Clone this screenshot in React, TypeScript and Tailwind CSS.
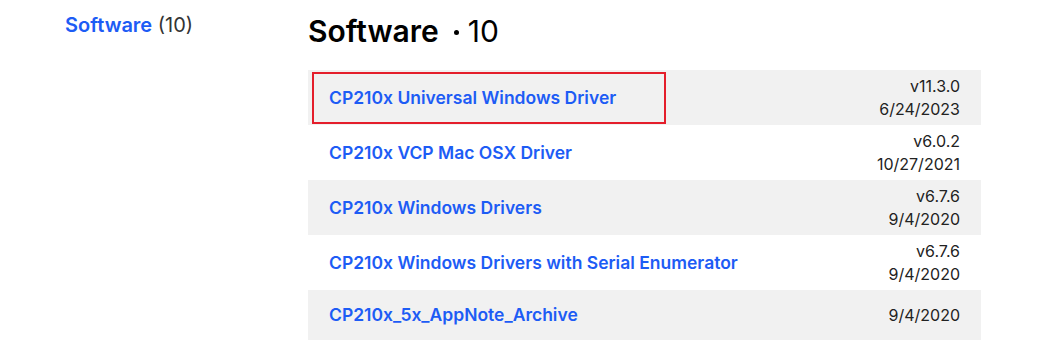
const rows = [
  { name: 'CP210x Universal Windows Driver', version: 'v11.3.0', date: '6/24/2023', highlight: true },
  { name: 'CP210x VCP Mac OSX Driver', version: 'v6.0.2', date: '10/27/2021' },
  { name: 'CP210x Windows Drivers', version: 'v6.7.6', date: '9/4/2020' },
  { name: 'CP210x Windows Drivers with Serial Enumerator', version: 'v6.7.6', date: '9/4/2020' },
  { name: 'CP210x_5x_AppNote_Archive', date: '9/4/2020' },
];

export default function App() {
  return (
    <div className="w-[1041px] h-[350px] bg-white flex font-['Inter',sans-serif] text-[#222]">
      {/* Sidebar */}
      <aside className="w-[308px] pl-[65px] pt-[11px] shrink-0">
        <a href="#" className="text-[20px] leading-[28px]">
          <span className="font-semibold text-[#1d5cf5]">Software</span>{' '}
          <span className="text-[#333]">(10)</span>
        </a>
      </aside>

      {/* Content */}
      <main className="w-[673px] pt-[11px]">
        <h2 className="flex items-center h-[40px] text-[30px] leading-[40px] text-black">
          <span className="font-semibold">Software</span>
          <span className="inline-block w-[5px] h-[5px] rounded-full bg-black ml-[15px] mr-[9px] mt-[3px]" />
          <span className="font-normal">10</span>
        </h2>
        <div className="mt-[19px] flex flex-col">
          {rows.map((row, i) => (
            <div
              key={row.name}
              className={`relative flex items-center justify-between pl-[21px] pr-[21px] ${
                i % 2 === 0 ? 'bg-[#f1f1f1]' : 'bg-white'
              } ${row.version ? 'h-[55px]' : 'h-[50px]'}`}
            >
              {row.highlight && (
                <div className="absolute left-[4px] top-[2px] w-[354px] h-[52px] border-2 border-[#e41e2b]" />
              )}
              <a href="#" className="text-[17.5px] font-semibold text-[#1d5cf5] leading-[24px]">
                {row.name}
              </a>
              <div className="flex flex-col items-end text-[16px] leading-[23px] text-[#222]">
                {row.version && <span>{row.version}</span>}
                <span>{row.date}</span>
              </div>
            </div>
          ))}
        </div>
      </main>
    </div>
  );
}
